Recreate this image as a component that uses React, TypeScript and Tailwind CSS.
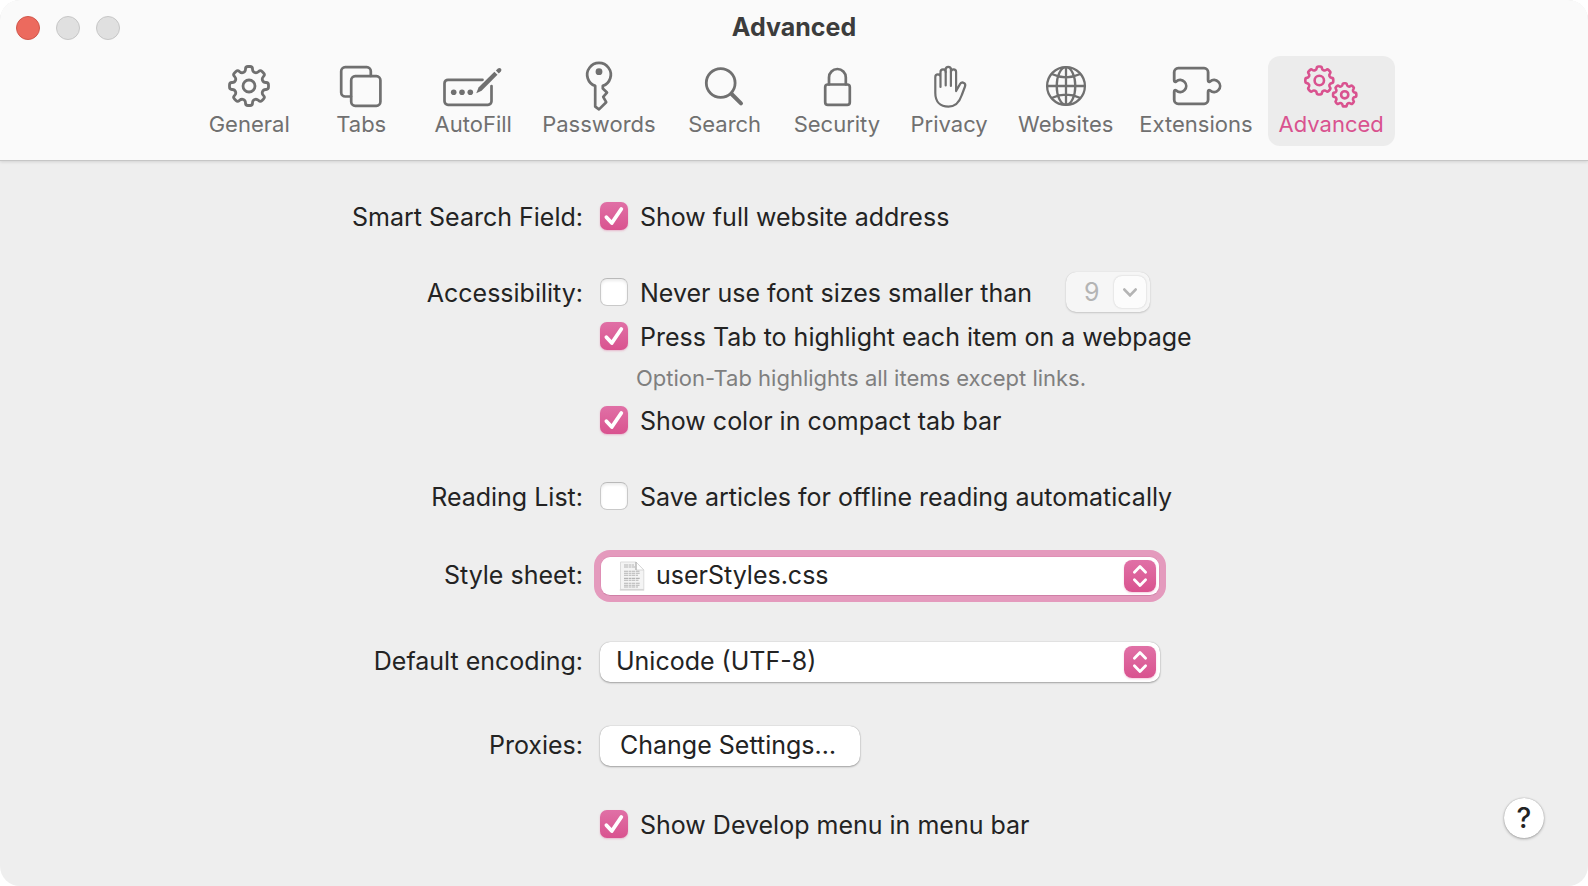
import React, { useState } from "react";

type Point = [number, number];

function roundedPolygon(points: Point[], radius: number): string {
  const n = points.length;
  const toward = (a: Point, b: Point): Point => {
    const d = Math.hypot(b[0] - a[0], b[1] - a[1]);
    const t = Math.min(radius, d / 2) / d;
    return [a[0] + (b[0] - a[0]) * t, a[1] + (b[1] - a[1]) * t];
  };
  return (
    points
      .map((p, i) => {
        const s = toward(p, points[(i + n - 1) % n]);
        const e = toward(p, points[(i + 1) % n]);
        return `${i ? "L" : "M"}${s[0].toFixed(2)} ${s[1].toFixed(2)}Q${p[0].toFixed(2)} ${p[1].toFixed(2)} ${e[0].toFixed(2)} ${e[1].toFixed(2)}`;
      })
      .join("") + "Z"
  );
}

function gearPath(cx: number, cy: number, outer: number, inner: number, corner: number): string {
  const points: Point[] = [];
  for (let tooth = 0; tooth < 8; tooth++) {
    const profile: Point[] = [
      [inner, -14],
      [outer, -10],
      [outer, 10],
      [inner, 14],
    ];
    for (const [r, offset] of profile) {
      const a = ((tooth * 45 + offset - 90) * Math.PI) / 180;
      points.push([cx + r * Math.cos(a), cy + r * Math.sin(a)]);
    }
  }
  return roundedPolygon(points, corner);
}

const icons: Record<string, React.ReactNode> = {
  General: (
    <g strokeWidth="2.8">
      <path d={gearPath(32, 26, 19.8, 14.8, 2.4)} />
      <circle cx="32" cy="26" r="6" />
    </g>
  ),
  Tabs: (
    <g strokeWidth="2.7">
      <path d="M41.8 16V11.2a4 4 0 0 0-4-4H16.2a4 4 0 0 0-4 4V32.5a4 4 0 0 0 4 4H22" />
      <rect x="22.2" y="16.2" width="29.2" height="29.6" rx="4" />
    </g>
  ),
  AutoFill: (
    <g strokeWidth="2.7">
      <path d="M41.5 19.8H7a3.5 3.5 0 0 0-3.5 3.5v18A3.5 3.5 0 0 0 7 44.8h40a3.5 3.5 0 0 0 3.5-3.5V26" />
      <g fill="currentColor" stroke="none">
        <circle cx="12.7" cy="32.3" r="2.8" />
        <circle cx="21" cy="32.3" r="2.8" />
        <circle cx="29.3" cy="32.3" r="2.8" />
        <path d="M35.3 33.2l2.2-5.6L53.4 11.7l3.1 3.1L40.6 30.8z" />
        <path d="M54.9 10.6l2-2a2 2 0 0 1 2.9 2.9l-2 2z" />
      </g>
    </g>
  ),
  Passwords: (
    <g strokeWidth="2.7">
      <path d="M28.2 25.9V46.6L32 49.4L39.2 42.2L36.2 36.9L40 32.6L35.8 28.6V25.9A11.8 11.8 0 1 0 28.2 25.9Z" />
      <circle cx="32" cy="11.7" r="3.4" fill="currentColor" stroke="none" />
    </g>
  ),
  Search: (
    <g strokeWidth="2.8">
      <circle cx="27.7" cy="23" r="14.4" />
      <path d="M38.6 34L48 43.4" strokeWidth="4" />
    </g>
  ),
  Security: (
    <g strokeWidth="2.7">
      <rect x="20.2" y="24.5" width="24.6" height="20.4" rx="2.6" />
      <path d="M24 24.5V17.4a8.4 8.4 0 0 1 16.8 0V24.5" />
    </g>
  ),
  Privacy: (
    <g strokeWidth="2.2">
      <path d="M23.5 27V17a2.6 2.6 0 0 0-5.2 0V33C18.3 41.5 23 46.6 31.5 46.6C38.5 46.6 42.5 42 44.8 35L48 26.5c.6-1.7.1-3-1.1-3.6c-1.6-.8-3.3-.1-4.2 1.7L39.1 31V12a2.6 2.6 0 0 0-5.2 0V9.4a2.6 2.6 0 0 0-5.2 0V12a2.6 2.6 0 0 0-5.2 0V17" />
      <path d="M28.7 12V25.5M33.9 12V26" />
    </g>
  ),
  Websites: (
    <g strokeWidth="2.3">
      <circle cx="32" cy="26" r="18.9" />
      <ellipse cx="32" cy="26" rx="9.3" ry="18.9" />
      <path d="M32 7.1V44.9M13.1 26H50.9M17.7 14Q32 20.6 46.3 14M17.7 38Q32 31.4 46.3 38" />
    </g>
  ),
  Extensions: (
    <g strokeWidth="2.8">
      <path d="M10.2 20V12.2a4 4 0 0 1 4-4H40.1a4 4 0 0 1 4 4V20q0 2.6 2 1.5A6 6 0 1 1 46.1 30.5q-2-1.1-2 1.5V39.8a4 4 0 0 1-4 4H14.2a4 4 0 0 1-4-4V32q0-2.6 2-1.5A6 6 0 1 0 12.2 21.5q-2 1.1-2-1.5Z" />
    </g>
  ),
  Advanced: (
    <g strokeWidth="2.6">
      <path d={gearPath(20.3, 20.5, 14.2, 11.2, 1.6)} />
      <circle cx="20.3" cy="20.5" r="4.7" />
      <path d={gearPath(45.7, 34.8, 11.8, 9.2, 1.4)} />
      <circle cx="45.7" cy="34.8" r="3.6" />
    </g>
  ),
};

function ToolbarItem({ name, selected }: { name: string; selected?: boolean }) {
  return (
    <button
      type="button"
      aria-pressed={!!selected}
      className={
        "flex min-w-27 flex-col items-center rounded-xl px-[11px] pt-1 pb-2.5 text-[22px] leading-6 " +
        (selected ? "bg-[#ececec] text-[#d9528f]" : "text-[#707070]")
      }
    >
      <svg
        viewBox="0 0 64 52"
        className="h-13 w-16"
        fill="none"
        stroke="currentColor"
        strokeLinecap="round"
        strokeLinejoin="round"
        aria-hidden="true"
      >
        {icons[name]}
      </svg>
      {name}
    </button>
  );
}

function Check({ label, initial = false }: { label: string; initial?: boolean }) {
  const [on, setOn] = useState(initial);
  return (
    <label className="flex items-center gap-3 leading-7">
      <span className="grid size-7 shrink-0">
        <input
          type="checkbox"
          checked={on}
          onChange={(e) => setOn(e.target.checked)}
          className="col-start-1 row-start-1 size-7 appearance-none rounded-[7px] border border-[#c9c9c9] border-t-[#b9b9b9] bg-white shadow-[inset_0_2px_3px_rgba(0,0,0,0.08)] checked:border-0 checked:bg-linear-to-b checked:from-[#e070a6] checked:to-[#d9528f] checked:shadow-[0_1px_2px_rgba(217,82,143,0.35)]"
        />
        {on && (
          <svg viewBox="0 0 28 28" className="pointer-events-none col-start-1 row-start-1 size-7" fill="none" stroke="white" strokeWidth="3.8" strokeLinecap="round" strokeLinejoin="round" aria-hidden="true">
            <path d="M6.4 15.2L11.8 21L21.3 7" />
          </svg>
        )}
      </span>
      <span className="-mb-0.5">{label}</span>
    </label>
  );
}

interface RowProps {
  label?: string;
  htmlFor?: string;
  labelClass?: string;
  className?: string;
  children: React.ReactNode;
}

function Row({ label, htmlFor, labelClass = "pt-0.5", className = "", children }: RowProps) {
  return (
    <div className={"grid min-h-10 grid-cols-[583fr_988fr] items-center gap-x-[17px] " + className}>
      <div className={"text-right " + labelClass}>{htmlFor ? <label htmlFor={htmlFor}>{label}</label> : label}</div>
      {children}
    </div>
  );
}

function PopUp({ id, options, focused, icon }: { id: string; options: string[]; focused?: boolean; icon?: React.ReactNode }) {
  return (
    <div className="grid w-140 max-w-full items-center">
      <select
        id={id}
        className={
          "col-start-1 row-start-1 h-10 w-full appearance-none rounded-[10px] bg-white pb-0.5 outline-none " +
          (icon ? "pl-[55px] " : "pl-4 ") +
          (focused
            ? "border border-[#df8fb5] border-b-[#cf7fa6] shadow-[0_0_0_6px_#e49abd]"
            : "shadow-[0_0_1px_rgba(0,0,0,0.35),0_1px_2px_rgba(0,0,0,0.3)]")
        }
      >
        {options.map((o) => (
          <option key={o}>{o}</option>
        ))}
      </select>
      <span className="pointer-events-none col-start-1 row-start-1 flex items-center justify-between pr-1 pl-[19px]">
        <span>{icon}</span>
        <svg viewBox="0 0 32 32" className="size-8 rounded-lg bg-linear-to-b from-[#e070a6] to-[#d9528f] shadow-[0_1px_2px_rgba(217,82,143,0.3)]" fill="none" stroke="white" strokeWidth="2.8" strokeLinecap="round" strokeLinejoin="round" aria-hidden="true">
          <path d="M10.4 12.3L16 6.6L21.6 12.3M10.4 19.7L16 25.4L21.6 19.7" />
        </svg>
      </span>
    </div>
  );
}

function DocumentIcon() {
  return (
    <svg viewBox="0 0 26 30" className="h-7.5 w-6.5" aria-hidden="true">
      <path d="M1.5 1H17L24.8 9V28.4H1.5Z" fill="#f4f4f4" stroke="#dcdcdc" strokeWidth="1" />
      <path d="M.8 29H25.2" stroke="#c9c9c9" strokeWidth="1" />
      <path d="M17 1V9H24.8Z" fill="#fff" stroke="#d0d0d0" strokeWidth=".8" />
      <path d="M17 1V9" stroke="#a8a8a8" strokeWidth="1" />
      <g stroke="#b4b4b4" strokeWidth="1.1" strokeDasharray="4 .6 2.5 .5 3.4 .7">
        <path d="M5 4H15M5 6H16.5" />
        <path d="M5 10.2H20.5M5 12.3H21M5 14.3H19" />
        <path d="M5 17.4H21M5 19.3H19.5" />
        <path d="M5 22.2H21M5 24.2H20.5M5 26H19" />
      </g>
    </svg>
  );
}

export default function App() {
  return (
    <div className="flex min-h-screen flex-col overflow-hidden rounded-[20px] bg-[#eeeeee] font-['Inter',sans-serif] text-[25px] leading-7 text-[#232323]">
      <header className="border-b border-[#c6c6c6] bg-[#fafafa] pb-3.5 shadow-[0_1px_3px_rgba(0,0,0,0.12)]">
        <div className="grid h-14 grid-cols-[1fr_auto_1fr] items-center px-4">
          <div className="flex gap-4">
            <button type="button" aria-label="Close" className="size-6 rounded-full border border-[#d0574b] bg-[#ec6a5e]" />
            <button type="button" aria-label="Minimize" className="size-6 rounded-full border border-[#c6c6c6] bg-[#e0e0e0]" />
            <button type="button" aria-label="Zoom" className="size-6 rounded-full border border-[#c6c6c6] bg-[#e0e0e0]" />
          </div>
          <h1 className="pb-0.5 font-bold text-[#3c3c3c]">Advanced</h1>
        </div>
        <nav className="flex justify-center gap-1 pl-0.5">
          {Object.keys(icons).map((name) => (
            <ToolbarItem key={name} name={name} selected={name === "Advanced"} />
          ))}
        </nav>
      </header>

      <main className="flex flex-col pt-[35px] pb-12">
        <Row label="Smart Search Field:">
          <Check label="Show full website address" initial />
        </Row>

        <Row label="Accessibility:" className="mt-9">
          <div className="flex items-center gap-[34px]">
            <Check label="Never use font sizes smaller than" />
            <div className="grid w-21 items-center">
              <select
                disabled
                aria-label="Minimum font size"
                className="col-start-1 row-start-1 h-10 w-full appearance-none rounded-[10px] bg-[#f6f6f6] pl-[18px] text-[#b4b4b4] opacity-100 shadow-[0_0_1px_rgba(0,0,0,0.15),0_1px_2px_rgba(0,0,0,0.16)]"
              >
                <option>9</option>
              </select>
              <svg viewBox="0 0 32 32" className="pointer-events-none col-start-1 row-start-1 mr-1 size-8 justify-self-end rounded-lg bg-[#fcfcfc] shadow-[0_0_2px_rgba(0,0,0,0.2)]" fill="none" stroke="#b4b4b4" strokeWidth="2.8" strokeLinecap="round" strokeLinejoin="round" aria-hidden="true">
                <path d="M10.4 13.6L16 19.4L21.6 13.6" />
              </svg>
            </div>
          </div>
        </Row>
        <Row className="mt-1">
          <Check label="Press Tab to highlight each item on a webpage" initial />
        </Row>
        <Row className="mt-0.5">
          <p className="pl-9 text-[22px] text-[#7f7f7f]">Option-Tab highlights all items except links.</p>
        </Row>
        <Row className="mt-0.5">
          <Check label="Show color in compact tab bar" initial />
        </Row>

        <Row label="Reading List:" className="mt-9">
          <Check label="Save articles for offline reading automatically" />
        </Row>

        <Row label="Style sheet:" htmlFor="style-sheet" labelClass="pb-0.5" className="mt-10">
          <PopUp id="style-sheet" options={["userStyles.css"]} icon={<DocumentIcon />} focused />
        </Row>

        <Row label="Default encoding:" htmlFor="encoding" labelClass="pb-0.5" className="mt-[46px]">
          <PopUp id="encoding" options={["Unicode (UTF-8)"]} />
        </Row>

        <Row label="Proxies:" labelClass="pb-0.5" className="mt-11">
          <button type="button" className="h-10 justify-self-start rounded-[10px] bg-white pr-6 pb-0.5 pl-5 shadow-[0_0_1px_rgba(0,0,0,0.35),0_1px_2px_rgba(0,0,0,0.3)]">
            Change Settings…
          </button>
        </Row>

        <Row className="mt-8">
          <div className="flex items-end justify-between pr-11">
            <Check label="Show Develop menu in menu bar" initial />
            <button type="button" aria-label="Help" className="size-10 rounded-full bg-white text-[28px] font-medium shadow-[0_0_1px_rgba(0,0,0,0.35),0_1px_3px_rgba(0,0,0,0.3)]">
              ?
            </button>
          </div>
        </Row>
      </main>
    </div>
  );
}
